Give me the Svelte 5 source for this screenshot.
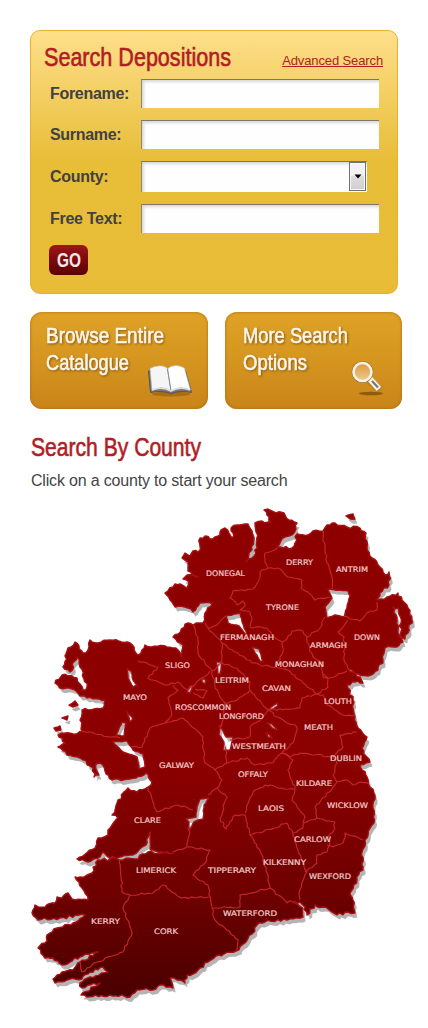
<script>
  const coast = "165,593 175,584 180,584 187,588 189,582 183,579 187,575 198,577 188,571 188,562 182,558 185,553 190,556 193,551 198,552 200,546 200,538 205,536 210,539 215,537 220,535 221,530 225,528 229,533 232,538 233,533 231,528 237,525 248,524 252,531 254,538 252,550 246,562 254,556 257,548 256,532 255,523 262,521 271,522 267,515 264,510 268,509 276,513 284,513 289,520 297,523 296,529 289,536 282,539 277,547 283,548 292,548 295,543 297,534 308,535 313,531 323,531 327,525 335,523 347,527 360,528 366,533 367,547 372,558 380,567 385,575 389,572 389,585 380,593 377,600 387,597 398,593 402,600 408,608 412,620 408,633 405,639 400,635 401,623 398,608 393,607 397,617 398,633 403,642 397,647 385,648 383,660 378,670 368,676 358,674 348,669 360,677 363,683 355,682 347,685 353,700 355,717 358,728 367,737 362,748 370,762 360,765 367,777 370,787 374,793 374,823 365,840 362,852 363,867 357,880 350,893 353,900 355,913 348,912 337,915 323,907 315,905 307,915 305,907 300,902 292,902 303,908 303,917 287,920 265,922 257,925 252,934 245,943 236,951 224,954 216,956 208,962 200,968 193,974 187,975 185,983 177,980 170,978 173,988 160,985 153,990 137,990 130,997 110,995 87,997 81,995 100,983 82,988 80,983 90,977 108,972 103,967 90,972 82,979 70,979 55,983 53,979 62,972 73,970 80,962 98,952 80,957 62,965 53,958 45,958 38,948 45,943 47,935 57,928 73,923 85,915 60,918 38,920 32,913 35,905 45,907 55,903 57,897 62,898 68,893 72,899 88,900 82,888 75,877 80,877 92,873 98,860 117,859 135,859 148,852 173,853 150,849 150,832 146,845 133,855 110,858 103,852 100,857 88,862 77,859 95,848 98,838 108,835 108,830 118,818 112,815 117,803 128,788 137,792 148,787 152,782 146,773 130,779 112,780 105,771 100,763 96,764 99,775 94,777 93,768 80,758 67,755 58,747 65,743 58,735 83,732 80,720 82,710 103,708 105,700 87,698 80,696 75,690 60,688 55,683 62,675 77,678 83,690 87,687 80,667 77,657 70,672 63,667 68,648 75,642 83,653 88,650 90,640 98,643 110,640 130,643 138,655 145,645 167,647 178,650 181,657 183,645 173,637 188,623 193,625 203,623 205,613 212,604 200,603 193,612 188,608 175,607 170,600";

  const lakes = [
    "328,589 348,591 350,596 344,617 335,615 327,618 325,607 332,598",
    "226,616 240,613 242,622 248,637 239,626 228,623",
    "252,647 259,649 263,662 260,661",
    "216,662 222,662 220,674 218,674",
    "202,678 206,680 205,684 202,682",
    "187,692 190,686 194,685 190,693",
    "269,709 277,703 278,706 272,710",
    "267,723 272,724 277,730 272,728",
    "266,733 270,735 272,738 268,737",
    "220,725 223,731 226,737 233,737 230,750 223,750 224,742 219,735",
    "127,669 131,671 133,680 137,685 133,687 128,678",
    "127,712 133,718 130,722",
    "122,722 126,723 124,736 116,735",
    "113,742 127,741 133,750 143,754 145,767 139,769 137,757 123,752",
    "200,799 209,798 204,805 203,819 198,820 194,822 190,829 188,829 189,822 186,819 196,817 197,807"
  ];

  const isles = [
    "346,516 353,514 355,519 350,519",
    "69,705 75,701 78,705 73,707",
    "62,718 68,716 67,720",
    "54,728 60,726 61,730 56,731"
  ];

  const borders = [
    "277,548 265,553 265,562 268,568 260,572 258,582 253,589 233,591 230,598 237,605 243,601 245,606 240,610 250,612 252,620 250,627 267,628 272,635 282,642 283,652 275,667",
    "268,568 278,568 288,577 302,580 301,588 308,592 315,600 330,597",
    "323,531 325,553 332,577 332,589",
    "344,616 350,619 360,621 367,613 377,610 377,602",
    "348,620 338,632 344,637 344,660 349,670",
    "325,617 320,628 307,637 307,642 313,657 322,663 323,677 330,678 347,671",
    "307,638 303,631 292,631 287,639 282,642",
    "205,623 208,628 217,625 226,616",
    "208,628 213,633 222,643 247,660 260,665 275,667 288,670 303,683 317,694 328,687 328,678 323,674",
    "222,643 222,662",
    "193,625 198,640 198,653 205,663 212,671 222,663 237,668 250,682 250,690 268,710",
    "212,671 215,688 225,703 237,700 250,690",
    "225,703 223,720 220,727",
    "230,740 250,737 250,727 262,718 268,710 300,708 302,698 317,694 323,695 327,705 343,715 355,715",
    "268,710 277,717 297,727 293,743 282,753",
    "282,753 290,757 300,753 333,757 343,747 340,735 357,732",
    "333,757 337,763 333,775 337,782 347,780 353,785 360,782 368,783",
    "225,747 227,763 247,758 255,765 273,763 282,753",
    "165,723 183,718 192,727 203,737 205,763 215,770 227,763",
    "215,770 222,780 217,788 208,795",
    "165,723 150,728 142,747 132,747",
    "83,731 110,737 120,738",
    "165,723 172,715 168,698 178,690 173,685",
    "138,661 158,667 148,678 165,685 178,682 188,690 210,671",
    "193,693 203,698 207,691 195,689",
    "148,788 157,812 178,805 193,810",
    "190,827 187,847 173,852",
    "187,847 210,850 205,863 193,875 208,885 212,907",
    "217,788 227,797 220,818 226,829 235,815 245,815 250,835 263,857 270,888 287,903 292,901",
    "245,813 253,792 265,785 282,788 295,790 292,800 305,817 303,828 293,833",
    "282,753 293,760 288,770 295,789",
    "250,835 263,832 287,823 293,833 298,850 307,872 300,890 300,900",
    "305,872 317,863 317,855 327,852 330,842 328,837 333,832 335,822 317,818 315,807 333,787 337,782",
    "304,823 317,818",
    "327,845 333,847 343,843 345,833 363,840",
    "270,888 240,895 240,907 212,908 215,920 227,930 238,940 237,950",
    "210,897 182,898 163,885 153,893 130,895 122,892 120,859",
    "130,895 123,908 132,933 123,952 97,962 82,972 80,962"
  ];

  const counties = [
    ["DONEGAL", 206, 245, 575.5], ["DERRY", 286, 313, 564.5], ["ANTRIM", 336, 368, 572],
    ["TYRONE", 266, 299, 610], ["FERMANAGH", 220, 274, 640], ["ARMAGH", 310, 347, 647.5],
    ["DOWN", 354, 380, 640], ["MONAGHAN", 275, 324, 666.5], ["SLIGO", 165, 190, 667.5],
    ["LEITRIM", 215, 249, 683], ["CAVAN", 262, 291, 690.5], ["MAYO", 123, 147, 700],
    ["ROSCOMMON", 175, 231, 709.5], ["LONGFORD", 219, 264, 719], ["LOUTH", 324, 352, 703.5],
    ["MEATH", 304, 333, 730], ["WESTMEATH", 232, 286, 749], ["DUBLIN", 330, 362, 761],
    ["GALWAY", 159, 194, 767.5], ["OFFALY", 238, 268, 777], ["KILDARE", 296, 332, 785.5],
    ["LAOIS", 258, 284, 810.5], ["WICKLOW", 327, 368, 808], ["CLARE", 134, 161, 822.5],
    ["CARLOW", 294, 331, 841.5], ["LIMERICK", 136, 176, 873], ["TIPPERARY", 208, 256, 873],
    ["KILKENNY", 263, 306, 864.5], ["WEXFORD", 309, 351, 879], ["WATERFORD", 223, 277, 916],
    ["KERRY", 91, 120, 924], ["CORK", 154, 178, 934]
  ];

  // Adds small deterministic wobbles between the survey points of a line.
  function rough(points, amp, closed) {
    const pts = points.split(" ").map((p) => p.split(",").map(Number));
    const n = pts.length;
    const out = [];
    for (let i = 0; i < (closed ? n : n - 1); i++) {
      const [x1, y1] = pts[i];
      const [x2, y2] = pts[(i + 1) % n];
      const len = Math.hypot(x2 - x1, y2 - y1);
      const steps = Math.max(1, Math.round(len / 3));
      out.push([x1, y1]);
      for (let s = 1; s < steps; s++) {
        const t = s / steps;
        const seed = Math.sin((x1 + s * 7.3) * 12.9898 + (y1 + s * 3.1) * 78.233) * 43758.5453;
        const off = (seed - Math.floor(seed) - 0.5) * 2 * amp;
        out.push([x1 + (x2 - x1) * t - ((y2 - y1) / len) * off, y1 + (y2 - y1) * t + ((x2 - x1) / len) * off]);
      }
    }
    if (!closed) out.push(pts[n - 1]);
    return "M" + out.map((p) => p[0].toFixed(1) + " " + p[1].toFixed(1)).join("L") + (closed ? "Z" : "");
  }

  const land = [rough(coast, 1.5, true), ...lakes.map((l) => rough(l, 0.4, true)), ...isles.map((l) => rough(l, 0.4, true))].join("");
  const lines = borders.map((b) => rough(b, 1, false)).join("");
</script>

{#snippet condensed(text, width, height, baseline, size)}
  <svg class="condensed" {width} {height} aria-label={text}>
    <text x="0" y={baseline} font-size={size} textLength={width - 1} lengthAdjust="spacingAndGlyphs">{text}</text>
  </svg>
{/snippet}

<main>
  <form class="panel">
    <header>
      <h2>{@render condensed("Search Depositions", 188, 30, 22, 26)}</h2>
      <a href="#advanced">Advanced Search</a>
    </header>
    <div class="row"><label for="fore">Forename:</label><input id="fore" type="text" /></div>
    <div class="row"><label for="sur">Surname:</label><input id="sur" type="text" /></div>
    <div class="row county">
      <label for="county">County:</label>
      <div class="select" id="county" role="combobox" tabindex="0" aria-expanded="false" aria-controls="map">
        <span class="arrow"><svg width="8" height="5" viewBox="0 0 8 5"><path d="M0.5 0.5h7L4 4.5z" /></svg></span>
      </div>
    </div>
    <div class="row"><label for="free">Free Text:</label><input id="free" type="text" /></div>
    <button type="button" class="go">{@render condensed("GO", 25, 22, 18.5, 21)}</button>
  </form>

  <nav>
    <a class="tile" href="#browse">
      {@render condensed("Browse Entire", 119, 27, 20, 21.5)}
      {@render condensed("Catalogue", 84, 27, 20, 21.5)}
      <svg class="icon book" width="48" height="34" viewBox="0 0 48 34">
        <ellipse cx="25" cy="29" rx="19" ry="2.5" fill="#8a560c" opacity=".55" />
        <path d="M2.5 6 L4.5 27.5 Q16 25 25 28.5 Q34 25 45.5 27.5 L39.5 6z" fill="#777" stroke="#555" />
        <path d="M4 3.5 Q8 1 14 .8 Q20 1 21.5 4 L25 26 Q16 20 6 25.5z" fill="#f5f5f5" stroke="#bbb" stroke-width=".6" />
        <path d="M21.5 4 Q24 .8 30 .6 Q36 1 38.5 3.5 L44.5 25 Q34 20 25 26z" fill="#fff" stroke="#bbb" stroke-width=".6" />
        <path d="M21.5 4 L25 26" stroke="#888" />
        <path d="M6 25 Q16 21 25 26 Q34 21 44 25" fill="none" stroke="#ddd" stroke-width="1.5" />
      </svg>
    </a>
    <a class="tile more" href="#options">
      {@render condensed("More Search", 106, 27, 20, 21.5)}
      {@render condensed("Options", 65, 27, 20, 21.5)}
      <svg class="icon glass" width="34" height="36" viewBox="0 0 34 36">
        <ellipse cx="20" cy="32.5" rx="12" ry="1.8" fill="#6b4208" opacity=".65" />
        <path d="M17 18 L29 29" stroke="#9b6a20" stroke-width="7" opacity=".5" />
        <path d="M18 17 L28 28" stroke="#f7f4ee" stroke-width="6" />
        <path d="M21 20 L27 26.5" stroke="#777" stroke-width="2.2" />
        <circle cx="11.5" cy="11" r="9" fill="#e3ab55" stroke="#9b7030" stroke-width="3.6" />
        <circle cx="11.5" cy="11" r="9" fill="url(#lens)" stroke="#f8f3e8" stroke-width="2.6" />
        <defs><linearGradient id="lens" x1="0" y1="0" x2="0" y2="1"><stop stop-color="#d99a42" /><stop offset="1" stop-color="#efcb8d" /></linearGradient></defs>
      </svg>
    </a>
  </nav>

  <section>
    <h2>{@render condensed("Search By County", 171, 30, 22, 26)}</h2>
    <p>Click on a county to start your search</p>
    <svg id="map" class="map" width="390" height="500" viewBox="28 504 390 500">
      <defs>
        <linearGradient id="ground" gradientUnits="userSpaceOnUse" x1="0" y1="505" x2="0" y2="1000">
          <stop offset="0" stop-color="#8e0000" />
          <stop offset=".53" stop-color="#8b0000" />
          <stop offset=".8" stop-color="#6c0000" />
          <stop offset="1" stop-color="#490000" />
        </linearGradient>
      </defs>
      <path d={land} class="shade" transform="translate(2.5 4.5)" />
      <path d={land} class="land" fill="url(#ground)" />
      <path d={lines} class="border" />
      {#each counties as [name, x1, x2, y]}
        <text x={x1} {y} textLength={x2 - x1} lengthAdjust="spacingAndGlyphs">{name}</text>
      {/each}
    </svg>
  </section>
</main>

<style>
  :global(body) { background: #fff; }
  main {
    box-sizing: border-box;
    width: 428px;
    height: 1028px;
    padding: 30px 0 0 30px;
    overflow: hidden;
    font-family: "Liberation Sans", Arial, sans-serif;
    color: #444;
  }
  h2, p { margin: 0; font-weight: normal; }
  .condensed { display: block; overflow: visible; }
  .condensed text {
    font-family: "Liberation Sans", Arial, sans-serif;
    fill: currentColor;
    stroke: currentColor;
    stroke-width: .6px;
  }
  h2 { color: #b01d24; }
  .panel {
    box-sizing: border-box;
    width: 368px;
    height: 264px;
    padding: 13px 14px 0 13px;
    border: 1px solid #e4b032;
    border-radius: 10px;
    background: linear-gradient(#fee08a 0, #fcdc83 12px, #e8bd38 130px, #e8bc37 100%);
  }
  header { display: flex; justify-content: space-between; height: 35px; }
  header a { margin-top: 9px; font-size: 13px; line-height: 15px; color: #b01d24; letter-spacing: -.12px; white-space: nowrap; }
  .row { display: flex; height: 29px; margin: 0 0 12px 5px; }
  .row label { box-sizing: border-box; width: 92px; padding-left: 1px; font-size: 16px; font-weight: bold; line-height: 29px; letter-spacing: -.3px; color: #414141; }
  .row.county { height: 31px; }
  .row.county label { line-height: 31px; }
  input, .select {
    box-sizing: border-box;
    width: 238px;
    height: 29px;
    margin: 0;
    padding: 0 4px;
    border: 0;
    border-top: 1px solid #7b7668;
    border-left: 1px solid #8c8674;
    border-radius: 0;
    background: #fefefe;
    box-shadow: inset 2px 2px 3px #d8d8d8;
    outline: 0;
  }
  .select { display: flex; justify-content: flex-end; width: 226px; height: 31px; padding: 0 1px 1px 0; }
  .arrow {
    box-sizing: border-box;
    display: flex;
    align-items: center;
    justify-content: center;
    width: 17px;
    height: 29px;
    border: 1px solid #707070;
    box-shadow: inset 0 0 0 1px #f7f7f7;
    background: linear-gradient(#f2f2f2 45%, #ddd 50%, #cfcfcf);
  }
  .go {
    display: flex;
    justify-content: center;
    width: 39px;
    height: 30px;
    margin-left: 5px;
    padding: 3px 0 0 1px;
    border: 0;
    border-radius: 6px;
    color: #f6e9e9;
    background: linear-gradient(#9d1619, #7b0a0d 50%, #5c0204);
  }
  .go :global(text) { font-weight: bold; stroke: none; }
  nav { display: flex; gap: 17px; margin-top: 18px; }
  .tile {
    position: relative;
    box-sizing: border-box;
    width: 178px;
    height: 97px;
    padding: 11px 0 0 16px;
    border-radius: 12px;
    color: #fbf6ea;
    background: linear-gradient(#dfa226, #d5951f 50%, #c98419);
    box-shadow: inset 0 0 3px #a8680f;
    text-decoration: none;
  }
  .tile.more { width: 177px; padding-left: 18px; }
  .tile .condensed { filter: drop-shadow(1px 1px 1px #8a5a10); }
  .icon { position: absolute; }
  .book { left: 116px; top: 53px; }
  .glass { left: 126px; top: 49px; }
  section h2 { height: 30px; margin-top: 25px; padding-left: 1px; }
  section p { margin-top: 8px; padding-left: 1px; font-size: 16px; line-height: 18px; letter-spacing: -.18px; white-space: nowrap; }
  .map { display: block; margin: 14px 0 0 -2px; }
  .shade { fill: #b4b4b4; fill-rule: evenodd; }
  .land { fill-rule: evenodd; stroke: #a80f13; stroke-width: 1.4; stroke-linejoin: round; }
  .border { fill: none; stroke: #c4262b; stroke-width: 1.15; stroke-linejoin: round; }
  .map text { font-family: "DejaVu Sans", sans-serif; font-size: 7.6px; fill: #f0cccc; stroke: #f0cccc; stroke-width: .2px; }
</style>
